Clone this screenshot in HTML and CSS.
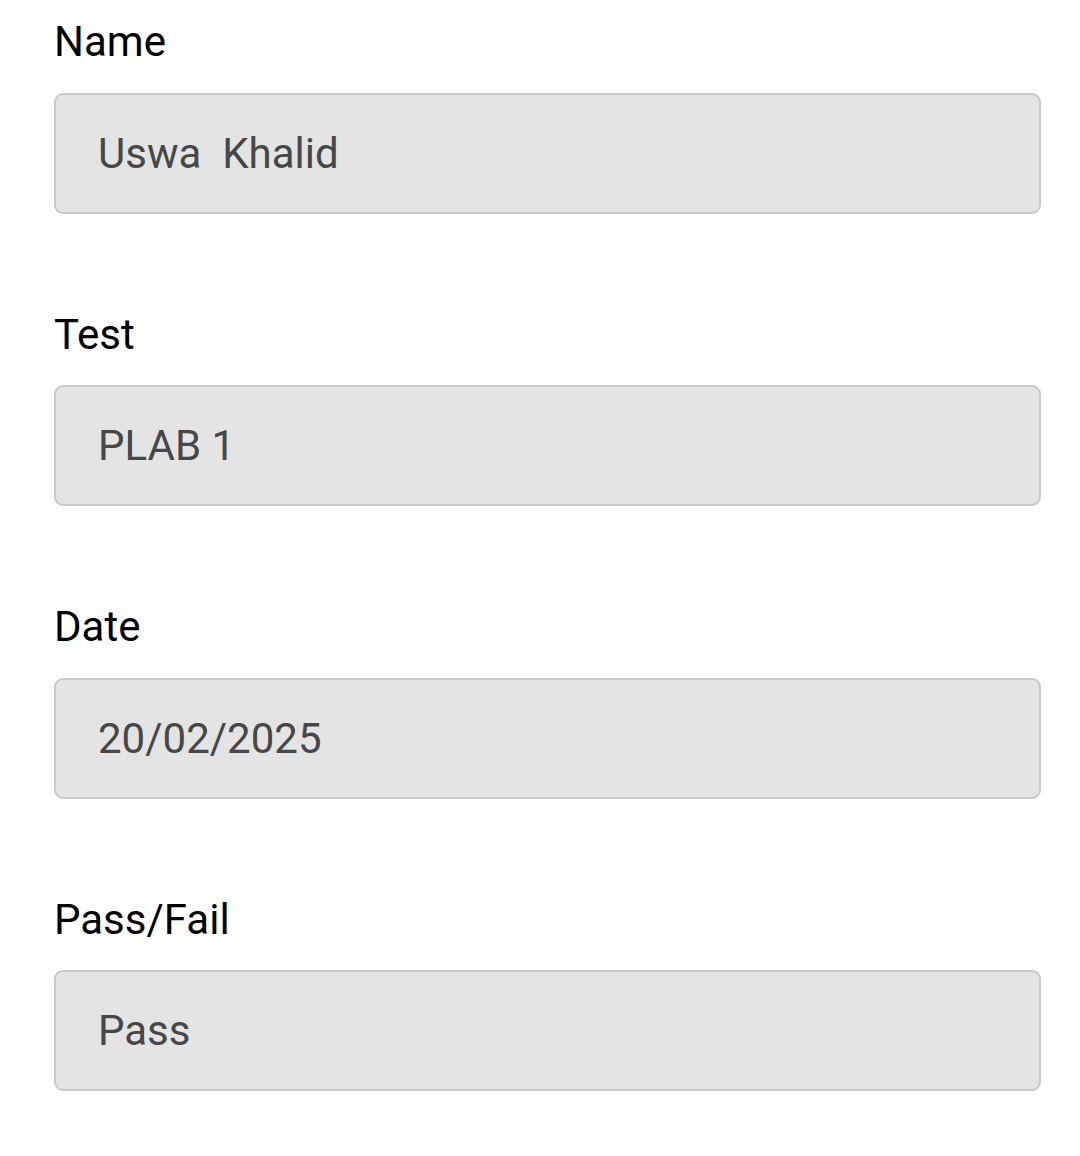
FILE: index.html
```html
<!DOCTYPE html>
<html>
<head>
<meta charset="utf-8">
<link rel="stylesheet" href="styles.css">
</head>
<body>
<div class="form">
  <div class="field">
    <div class="label">Name</div>
    <div class="box">Uswa&nbsp; Khalid</div>
  </div>
  <div class="field">
    <div class="label">Test</div>
    <div class="box">PLAB 1</div>
  </div>
  <div class="field">
    <div class="label">Date</div>
    <div class="box">20/02/2025</div>
  </div>
  <div class="field">
    <div class="label">Pass/Fail</div>
    <div class="box">Pass</div>
  </div>
</div>
</body>
</html>
```

FILE: styles.css
```css
html, body {
  margin: 0;
  padding: 0;
  background: #ffffff;
}
body {
  font-family: Roboto, "Liberation Sans", sans-serif;
}
.form {
  display: flex;
  flex-direction: column;
  gap: 97px;
  padding: 18px 39px 0 54px;
}
.field {
  display: flex;
  flex-direction: column;
  gap: 26.5px;
}
.label {
  font-size: 42px;
  line-height: 48px;
  color: #000000;
}
.box {
  box-sizing: border-box;
  height: 121px;
  width: 987px;
  border: 2px solid #c9c9c9;
  border-radius: 9px;
  background: #e4e4e4;
  display: flex;
  align-items: center;
  padding-left: 42px;
  font-size: 42px;
  color: #474747;
}
```
